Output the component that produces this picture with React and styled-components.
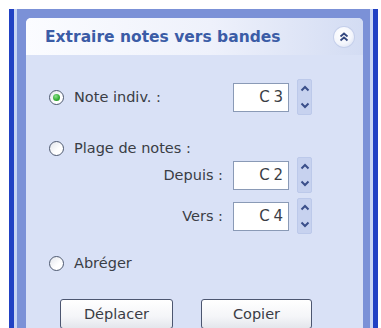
import styled, { createGlobalStyle } from 'styled-components';

const GlobalStyle = createGlobalStyle`
  html, body {
    margin: 0;
    height: 328px;
    overflow: hidden;
    background: #ffffff;
  }
  body {
    font-family: "DejaVu Sans", "Liberation Sans", sans-serif;
  }
`;

const Page = styled.div`
  padding: 9px 0 0 9px;
  width: 369px;
`;

const Edge = styled.div`
  background: #c9d5f4;
  border-left: 5px solid #2141c4;
  border-right: 5px solid #2141c4;
  padding: 0 3px;
`;

const Frame = styled.div`
  background: #7b91d7;
  padding: 9px 7px 0 9px;
  height: 320px;
`;

const Panel = styled.div`
  display: flex;
  flex-direction: column;
  height: 100%;
  background: #d9e1f6;
  border-radius: 5px 5px 0 0;
  overflow: hidden;
`;

const Header = styled.div`
  display: flex;
  align-items: center;
  justify-content: space-between;
  height: 37px;
  padding: 0 9px 0 19px;
  background: linear-gradient(to right, #fbfcff 0%, #eef1fb 55%, #d3dcf3 100%);
`;

const Title = styled.span`
  font-family: "DejaVu Sans", sans-serif;
  font-weight: bold;
  font-size: 15.5px;
  color: #3b5ca6;
`;

const Collapse = styled.div`
  width: 20px;
  height: 20px;
  border-radius: 50%;
  background: radial-gradient(circle at 40% 35%, #ffffff 0%, #f4f6fc 55%, #d2daf0 100%);
  box-shadow: 0 0 0 1px #c5cfea;
  display: flex;
  align-items: center;
  justify-content: center;
`;

const Body = styled.div`
  display: flex;
  flex-direction: column;
  padding: 24px 51px 0 23px;
  color: #3a3d45;
  font-size: 14.5px;
`;

const Row = styled.div`
  display: grid;
  grid-template-columns: 1fr 56px 15px;
  column-gap: 8px;
  align-items: center;
  height: ${({ $h }) => $h}px;
  margin-top: ${({ $mt }) => $mt || 0}px;
`;

const RadioLabel = styled.label`
  display: flex;
  align-items: center;
  gap: 10px;
  white-space: nowrap;
`;

const RadioCircle = styled.span`
  width: 15px;
  height: 15px;
  box-sizing: border-box;
  border-radius: 50%;
  border: 1px solid #4f5a70;
  background: linear-gradient(135deg, #e2e5ec 0%, #ffffff 60%);
  display: flex;
  align-items: center;
  justify-content: center;
`;

const RadioDot = styled.span`
  width: 7px;
  height: 7px;
  border-radius: 50%;
  background: radial-gradient(circle at 40% 35%, #8fe08f 0%, #36b036 55%, #1f8a1f 100%);
`;

const FieldLabel = styled.span`
  text-align: right;
  padding-right: 2px;
`;

const ValueBox = styled.div`
  height: 29px;
  box-sizing: border-box;
  border: 1px solid #8a9ab6;
  background: #ffffff;
  display: flex;
  align-items: center;
  justify-content: flex-end;
  padding-right: 5px;
  font-size: 15px;
  color: #3a3d45;
  word-spacing: -1px;
`;

const Spinner = styled.div`
  height: 36px;
  box-sizing: border-box;
  border-radius: 2px;
  background: #c7d2ef;
  border: 1px solid #bcc9ea;
  display: flex;
  flex-direction: column;
  justify-content: space-between;
  align-items: center;
  padding: 5px 0;
`;

const Buttons = styled.div`
  display: flex;
  gap: 28px;
  padding-left: 11px;
  margin-top: 26px;
`;

const Button = styled.button`
  width: ${({ $w }) => $w}px;
  height: 30px;
  border: 1px solid #4c5670;
  border-radius: 3px;
  background: linear-gradient(to bottom, #ffffff 0%, #f4f5f8 60%, #e3e6ec 100%);
  font-family: "DejaVu Sans", sans-serif;
  font-size: 14.5px;
  color: #3a3d45;
  padding: 0;
`;

const Chevron = ({ down }) => (
  <svg width="10" height="7" viewBox="0 0 10 7">
    <path
      d={down ? 'M1.5 1.5 L5 5 L8.5 1.5' : 'M1.5 5.5 L5 2 L8.5 5.5'}
      fill="none"
      stroke="#3b4f8a"
      strokeWidth="2"
    />
  </svg>
);

const Spin = () => (
  <Spinner>
    <Chevron />
    <Chevron down />
  </Spinner>
);

const Radio = ({ checked, children }) => (
  <RadioLabel>
    <RadioCircle>{checked && <RadioDot />}</RadioCircle>
    {children}
  </RadioLabel>
);

export default function App() {
  return (
    <Page>
      <GlobalStyle />
      <Edge>
        <Frame>
          <Panel>
            <Header>
              <Title>Extraire notes vers bandes</Title>
              <Collapse>
                <svg width="10" height="10" viewBox="0 0 10 10">
                  <path d="M1.5 4.5 L5 1.5 L8.5 4.5 M1.5 8.5 L5 5.5 L8.5 8.5" fill="none" stroke="#33477f" strokeWidth="1.8" />
                </svg>
              </Collapse>
            </Header>
            <Body>
              <Row $h={36}>
                <Radio checked>Note indiv. :</Radio>
                <ValueBox>C 3</ValueBox>
                <Spin />
              </Row>
              <Row $h={18} $mt={24}>
                <Radio>Plage de notes :</Radio>
              </Row>
              <Row $h={36}>
                <FieldLabel>Depuis :</FieldLabel>
                <ValueBox>C 2</ValueBox>
                <Spin />
              </Row>
              <Row $h={36} $mt={5}>
                <FieldLabel>Vers :</FieldLabel>
                <ValueBox>C 4</ValueBox>
                <Spin />
              </Row>
              <Row $h={20} $mt={19}>
                <Radio>Abréger</Radio>
              </Row>
              <Buttons>
                <Button $w={115}>Déplacer</Button>
                <Button $w={113}>Copier</Button>
              </Buttons>
            </Body>
          </Panel>
        </Frame>
      </Edge>
    </Page>
  );
}
